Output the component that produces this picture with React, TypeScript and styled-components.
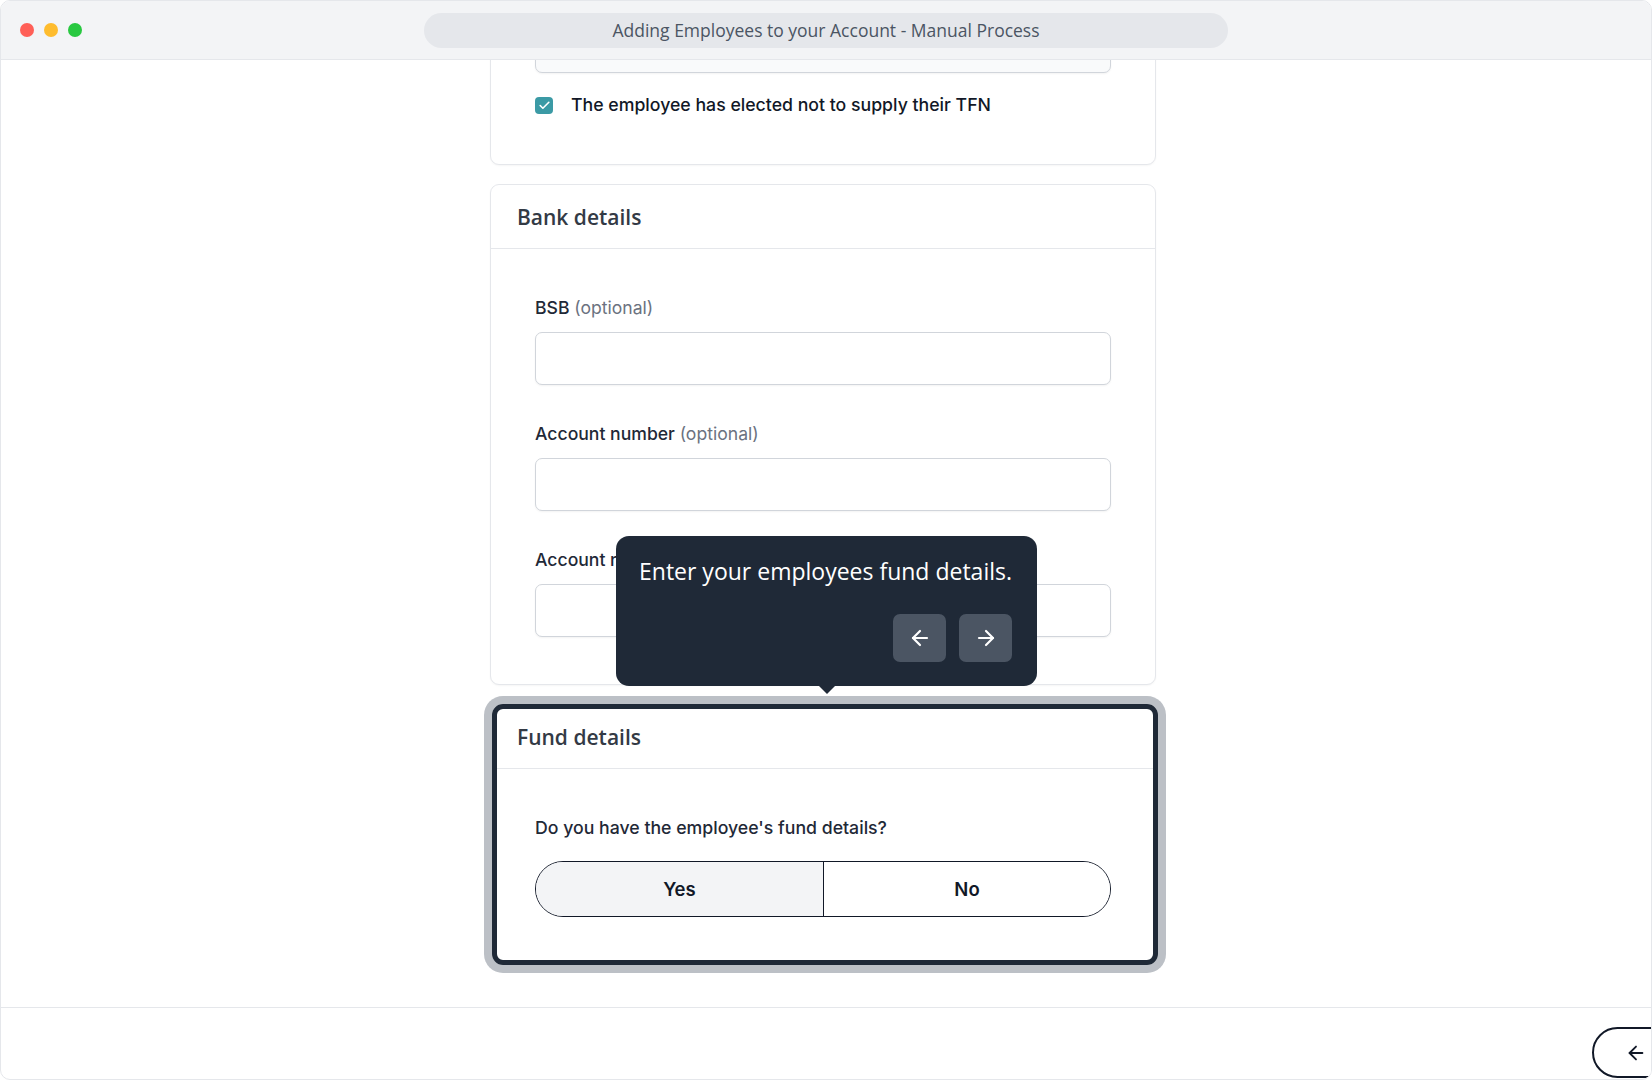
import React from 'react';
import styled, { createGlobalStyle } from 'styled-components';
import { ArrowLeft, ArrowRight, Check } from 'lucide-react';

const GlobalStyle = createGlobalStyle`
  html, body {
    margin: 0;
    padding: 0;
    background: #fff;
  }
  * {
    box-sizing: border-box;
  }
`;

const HEADING_FONT = `'Open Sans', 'Noto Sans', sans-serif`;
const BODY_FONT = `'Inter', 'Noto Sans', sans-serif`;

const Window = styled.div`
  width: 1652px;
  height: 1080px;
  border: 1px solid #e5e7eb;
  border-radius: 10px;
  overflow: hidden;
  display: flex;
  flex-direction: column;
  background: #fff;
`;

const TitleBar = styled.div`
  height: 59px;
  flex: none;
  display: grid;
  grid-template-columns: 1fr 804px 1fr;
  align-items: center;
  background: #f3f4f6;
  border-bottom: 1px solid #e5e7eb;
`;

const Lights = styled.div`
  display: flex;
  gap: 10px;
  padding-left: 19px;
`;

const Light = styled.span<{ $color: string }>`
  width: 14px;
  height: 14px;
  border-radius: 50%;
  background: ${(p) => p.$color};
`;

const AddressPill = styled.div`
  height: 35px;
  border-radius: 18px;
  background: #e5e7eb;
  display: flex;
  align-items: center;
  justify-content: center;
  font-family: ${HEADING_FONT};
  font-size: 17.5px;
  color: #4b5563;
`;

const Content = styled.div`
  flex: 1;
  overflow: hidden;
  padding-right: 6px;
`;

const Column = styled.div`
  width: 666px;
  margin: -81px auto 0;
  display: flex;
  flex-direction: column;
  gap: 19px;
`;

const CardWrap = styled.div`
  position: relative;
`;

const Card = styled.section<{ $highlight?: boolean }>`
  position: relative;
  background: #fff;
  border: 1px solid #e5e7eb;
  border-radius: 9px;
  box-shadow: 0 1px 2px rgba(0, 0, 0, 0.04);

  ${(p) =>
    p.$highlight &&
    `
    &::after {
      content: '';
      position: absolute;
      inset: -1px -3px -1px 1px;
      border: 5px solid #1f2937;
      border-radius: 11px;
      box-shadow: 0 0 0 8px #bcc0c6;
      pointer-events: none;
    }
  `}
`;

const CardHeader = styled.header`
  height: 64px;
  display: flex;
  align-items: center;
  padding: 0 26px;
  border-bottom: 1px solid #e5e7eb;
  font-family: ${HEADING_FONT};
  font-weight: 600;
  font-size: 21px;
  color: #333a45;
`;

const CardBody = styled.div<{ $top?: number }>`
  padding: ${(p) => p.$top ?? 47}px 44px 47px;
  display: flex;
  flex-direction: column;
  gap: 37px;
`;

const Field = styled.div`
  display: flex;
  flex-direction: column;
  gap: 12px;
`;

const Label = styled.label`
  font-family: ${BODY_FONT};
  font-size: 17.6px;
  line-height: 24px;
  font-weight: 500;
  color: #1f2937;
`;

const Optional = styled.span`
  font-weight: 400;
  color: #6b7280;
`;

const Input = styled.input<{ $muted?: boolean }>`
  height: 53px;
  width: 100%;
  border: 1px solid #d1d5db;
  border-radius: 7px;
  background: ${(p) => (p.$muted ? '#f9fafb' : '#fff')};
  box-shadow: 0 1px 2px rgba(0, 0, 0, 0.05);
  outline: none;
`;

const CheckRow = styled.div`
  display: flex;
  align-items: center;
  gap: 18px;
  margin-top: -17px;
  font-family: ${BODY_FONT};
  font-size: 17.7px;
  line-height: 24px;
  font-weight: 500;
  color: #111827;
`;

const CheckBox = styled.span`
  width: 18px;
  height: 17px;
  border-radius: 4px;
  background: #3b9aa5;
  display: flex;
  align-items: center;
  justify-content: center;
  color: #fff;
`;

const Question = styled.div`
  font-family: ${BODY_FONT};
  font-size: 17.7px;
  line-height: 24px;
  font-weight: 500;
  color: #1f2937;
  margin-bottom: -16px;
`;

const Toggle = styled.div`
  height: 56px;
  display: grid;
  grid-template-columns: 1fr 1fr;
  border: 1.5px solid #111827;
  border-radius: 28px;
  overflow: hidden;
`;

const ToggleOption = styled.button<{ $active?: boolean }>`
  border: none;
  background: ${(p) => (p.$active ? '#f3f4f6' : '#fff')};
  font-family: ${BODY_FONT};
  font-size: 18.5px;
  font-weight: 600;
  color: #111827;
  & + & {
    border-left: 1.5px solid #111827;
  }
`;

const Tooltip = styled.div`
  position: absolute;
  bottom: calc(100% + 18px);
  left: 126px;
  width: 421px;
  height: 150px;
  background: #1f2937;
  border-radius: 13px;
  padding: 19px 25px 24px 23px;
  display: flex;
  flex-direction: column;
  justify-content: space-between;
  z-index: 2;

  &::after {
    content: '';
    position: absolute;
    top: 100%;
    left: 50%;
    margin-left: -8px;
    border: 8px solid transparent;
    border-top-color: #1f2937;
    border-bottom: 0;
  }
`;

const TooltipText = styled.p`
  margin: 0;
  font-family: ${HEADING_FONT};
  font-size: 23px;
  line-height: 32px;
  font-weight: 400;
  color: #fff;
`;

const TooltipNav = styled.div`
  display: flex;
  justify-content: flex-end;
  gap: 13px;
`;

const NavButton = styled.button`
  width: 53px;
  height: 48px;
  border: none;
  border-radius: 7px;
  background: #4b5563;
  color: #fff;
  display: flex;
  align-items: center;
  justify-content: center;
`;

const Footer = styled.footer`
  height: 72px;
  flex: none;
  border-top: 1px solid #e5e7eb;
  display: flex;
  justify-content: flex-end;
  padding-top: 19px;
`;

const BackButton = styled.button`
  width: 100px;
  height: 51px;
  margin-right: -41px;
  border: 2px solid #111827;
  border-radius: 26px;
  background: #fff;
  color: #111827;
  display: flex;
  align-items: center;
  padding-left: 31px;
`;

export default function App() {
  return (
    <>
      <GlobalStyle />
      <Window>
        <TitleBar>
          <Lights>
            <Light $color="#ff5f57" />
            <Light $color="#febc2e" />
            <Light $color="#28c840" />
          </Lights>
          <AddressPill>Adding Employees to your Account - Manual Process</AddressPill>
          <div />
        </TitleBar>

        <Content>
          <Column>
            <Card>
              <CardBody $top={40}>
                <Input $muted readOnly />
                <CheckRow>
                  <CheckBox>
                    <Check size={13} strokeWidth={3} />
                  </CheckBox>
                  The employee has elected not to supply their TFN
                </CheckRow>
              </CardBody>
            </Card>

            <Card>
              <CardHeader>Bank details</CardHeader>
              <CardBody>
                <Field>
                  <Label>
                    BSB <Optional>(optional)</Optional>
                  </Label>
                  <Input />
                </Field>
                <Field>
                  <Label>
                    Account number <Optional>(optional)</Optional>
                  </Label>
                  <Input />
                </Field>
                <Field>
                  <Label>Account name</Label>
                  <Input />
                </Field>
              </CardBody>
            </Card>

            <CardWrap>
              <Tooltip>
                <TooltipText>Enter your employees fund details.</TooltipText>
                <TooltipNav>
                  <NavButton>
                    <ArrowLeft size={24} strokeWidth={2.2} />
                  </NavButton>
                  <NavButton>
                    <ArrowRight size={24} strokeWidth={2.2} />
                  </NavButton>
                </TooltipNav>
              </Tooltip>
              <Card $highlight>
                <CardHeader>Fund details</CardHeader>
                <CardBody>
                  <Question>Do you have the employee's fund details?</Question>
                  <Toggle>
                    <ToggleOption $active>Yes</ToggleOption>
                    <ToggleOption>No</ToggleOption>
                  </Toggle>
                </CardBody>
              </Card>
            </CardWrap>
          </Column>
        </Content>

        <Footer>
          <BackButton>
            <ArrowLeft size={22} strokeWidth={2} />
          </BackButton>
        </Footer>
      </Window>
    </>
  );
}
